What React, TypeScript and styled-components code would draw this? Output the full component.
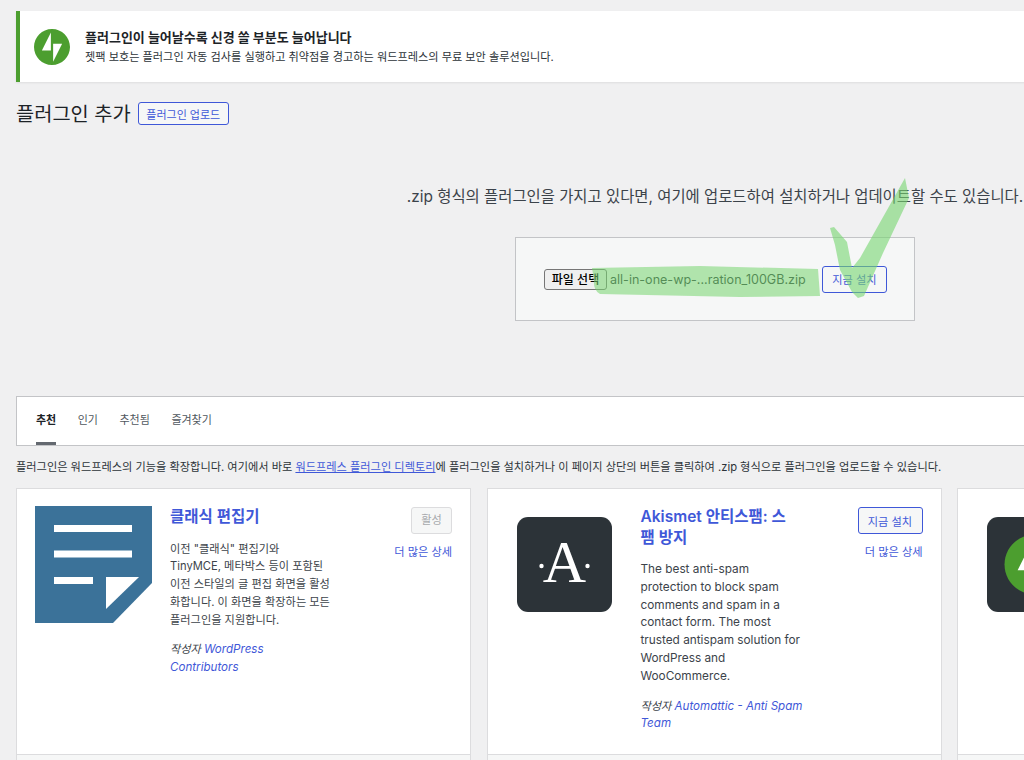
import styled, { createGlobalStyle } from "styled-components";

const GlobalStyle = createGlobalStyle`
  html, body {
    margin: 0;
    height: 760px;
    overflow: hidden;
    background: #f0f0f1;
  }
  body {
    font-family: Inter, "Noto Sans CJK KR", sans-serif;
    color: #3c434a;
    font-size: 12px;
  }
`;

const ACCENT = "#3f58d8";

const Page = styled.div`
  position: relative;
  width: 1398px;
  height: 760px;
  overflow: hidden;
  padding: 11px 0 0 16px;
`;

const Notice = styled.div`
  display: flex;
  align-items: center;
  gap: 15px;
  height: 71px;
  box-sizing: border-box;
  padding-left: 14px;
  background: #fff;
  border-left: 4px solid #4c9e2f;
  box-shadow: 0 1px 2px rgba(0, 0, 0, 0.08);
`;

const NoticeBody = styled.div`
  display: flex;
  flex-direction: column;
  gap: 3px;
`;

const NoticeTitle = styled.div`
  font-size: 13px;
  font-weight: 700;
  line-height: 18px;
  color: #1d2327;
`;

const NoticeText = styled.div`
  font-size: 11.17px;
  line-height: 16px;
  color: #2c3338;
`;

const HeadingRow = styled.div`
  display: flex;
  align-items: center;
  gap: 7px;
  margin-top: 20px;
  height: 23px;
`;

const Heading = styled.h1`
  margin: 0;
  font-size: 19.8px;
  font-weight: 400;
  line-height: 22px;
  color: #1d2327;
`;

const OutlineButton = styled.button<{ $size?: "sm" | "md" }>`
  display: inline-flex;
  align-items: center;
  justify-content: center;
  box-sizing: border-box;
  padding: 0;
  font-family: inherit;
  font-size: ${(p) => (p.$size === "sm" ? "11px" : "11.2px")};
  width: ${(p) => (p.$size === "sm" ? "91px" : "65px")};
  height: ${(p) => (p.$size === "sm" ? "23px" : "27px")};
  color: ${ACCENT};
  background: #f6f7f7;
  border: 1px solid ${ACCENT};
  border-radius: 3px;
`;

const UploadSection = styled.section`
  display: flex;
  flex-direction: column;
  align-items: center;
  margin-top: 60px;
`;

const UploadHint = styled.p`
  margin: 0;
  font-size: 15.4px;
  line-height: 24px;
  color: #3c434a;
`;

const UploadBox = styled.div`
  display: flex;
  align-items: center;
  box-sizing: border-box;
  width: 400px;
  height: 84px;
  margin-top: 28px;
  padding-left: 28px;
  background: #f6f7f7;
  border: 1px solid #c3c4c7;
`;

const FilePicker = styled.span`
  box-sizing: border-box;
  width: 63px;
  height: 21px;
  line-height: 19px;
  text-align: center;
  font-size: 12px;
  font-weight: 500;
  color: #000;
  background: #efefef;
  border: 1px solid #767676;
  border-radius: 3px;
`;

const FileName = styled.span`
  width: 215px;
  padding-left: 3px;
  box-sizing: border-box;
  font-size: 12.55px;
  color: #2c3338;
`;

const Tabs = styled.nav`
  display: flex;
  gap: 21.5px;
  box-sizing: border-box;
  height: 50px;
  margin-top: 75px;
  padding-left: 19px;
  background: #fff;
  border: 1px solid #c3c4c7;
`;

const Tab = styled.a<{ $active?: boolean }>`
  display: flex;
  align-items: center;
  box-sizing: border-box;
  height: 48px;
  padding-bottom: 2px;
  font-size: 11px;
  font-weight: ${(p) => (p.$active ? 600 : 400)};
  color: ${(p) => (p.$active ? "#1d2327" : "#50575e")};
  border-bottom: 3px solid ${(p) => (p.$active ? "#646970" : "transparent")};
`;

const Intro = styled.p`
  margin: 13px 0 0;
  font-size: 11.19px;
  line-height: 17px;
  white-space: nowrap;
  color: #2c3338;

  & a {
    color: ${ACCENT};
    text-decoration: underline;
  }
`;

const CardGrid = styled.div`
  display: grid;
  grid-template-columns: repeat(3, 455px);
  column-gap: 15.5px;
  margin-top: 12px;
`;

const Card = styled.article`
  background: #fff;
  border: 1px solid #dcdcde;
`;

const CardTop = styled.div`
  display: grid;
  grid-template-columns: 117px 164px 1fr;
  column-gap: 18px;
  align-items: start;
  box-sizing: border-box;
  height: 265px;
  padding: 17px 18px 0;
`;

const CardFooter = styled.div`
  height: 60px;
  background: #f6f7f7;
  border-top: 1px solid #dcdcde;
`;

const CardMain = styled.div`
  display: flex;
  flex-direction: column;
  padding-top: 1px;
`;

const CardTitle = styled.h3`
  margin: 0 0 13px;
  max-width: 155px;
  font-size: 15.5px;
  font-weight: 600;
  line-height: 20.5px;
  color: ${ACCENT};
`;

const CardText = styled.p<{ $latin?: boolean }>`
  margin: 0 0 12px;
  max-width: 163px;
  font-size: ${(p) => (p.$latin ? "11.8px" : "11.2px")};
  line-height: 17.8px;
  color: #3c434a;
`;

const Author = styled.p`
  margin: 0;
  font-size: 11.2px;
  line-height: 17.8px;
  font-style: italic;
  color: #3c434a;

  & a {
    font-size: 11.6px;
    color: ${ACCENT};
  }
`;

const Actions = styled.div`
  display: flex;
  flex-direction: column;
  align-items: flex-end;
  gap: 10px;
  padding-top: 1px;
`;

const DisabledButton = styled.span`
  box-sizing: border-box;
  width: 41px;
  height: 27px;
  line-height: 25px;
  text-align: center;
  font-size: 11.2px;
  color: #a7aaad;
  background: #f6f7f7;
  border: 1px solid #dcdcde;
  border-radius: 3px;
`;

const MoreLink = styled.a`
  font-size: 11.2px;
  line-height: 17px;
  color: ${ACCENT};
`;

const Scribble = styled.svg`
  position: absolute;
  top: 0;
  left: 0;
  pointer-events: none;
`;

const BOLT_PATH =
  "M16 0C7.2 0 0 7.2 0 16s7.2 16 16 16 16-7.2 16-16S24.8 0 16 0zM15 19H7l8-16v16zm2 10V13h8l-8 16z";

function ClassicEditorIcon() {
  return (
    <svg width="117" height="117" viewBox="0 0 117 117">
      <path d="M0 0h117v77L78 117H0z" fill="#3b7299" />
      <path d="M19 19h78v7H19zM19 44.5h78v7H19zM19 71h39v7H19z" fill="#fff" />
      <path d="M71 71h33L71 103z" fill="#fff" />
    </svg>
  );
}

function AkismetIcon() {
  return (
    <svg width="117" height="117" viewBox="0 0 117 117">
      <rect x="11" y="11" width="95" height="95" rx="11" fill="#2c3338" />
      <text x="58.5" y="76" textAnchor="middle" fontFamily="'Liberation Serif', serif" fontSize="60" fill="#fff">
        A
      </text>
      <circle cx="35.5" cy="60" r="2.2" fill="#fff" />
      <circle cx="81.5" cy="60" r="2.2" fill="#fff" />
    </svg>
  );
}

function JetpackIcon() {
  return (
    <svg width="117" height="117" viewBox="0 0 117 117">
      <rect x="11" y="11" width="95" height="95" rx="11" fill="#2c3338" />
      <g transform="translate(28.5 28.5) scale(1.875)">
        <circle cx="16" cy="16" r="15" fill="#fff" />
        <path d="M16 0C7.2 0 0 7.2 0 16s7.2 16 16 16 16-7.2 16-16S24.8 0 16 0z" fill="#4c9e2f" />
        <path d="M15 19H7l8-16v16zM17 29V13h8l-8 16z" fill="#fff" />
      </g>
    </svg>
  );
}

export default function App() {
  return (
    <>
      <GlobalStyle />
      <Page>
        <Notice>
          <svg width="36" height="36" viewBox="0 0 32 32">
            <path d={BOLT_PATH} fill="#4c9e2f" fillRule="evenodd" />
          </svg>
          <NoticeBody>
            <NoticeTitle>플러그인이 늘어날수록 신경 쓸 부분도 늘어납니다</NoticeTitle>
            <NoticeText>젯팩 보호는 플러그인 자동 검사를 실행하고 취약점을 경고하는 워드프레스의 무료 보안 솔루션입니다.</NoticeText>
          </NoticeBody>
        </Notice>

        <HeadingRow>
          <Heading>플러그인 추가</Heading>
          <OutlineButton $size="sm">플러그인 업로드</OutlineButton>
        </HeadingRow>

        <UploadSection>
          <UploadHint>.zip 형식의 플러그인을 가지고 있다면, 여기에 업로드하여 설치하거나 업데이트할 수도 있습니다.</UploadHint>
          <UploadBox>
            <FilePicker>파일 선택</FilePicker>
            <FileName>all-in-one-wp-...ration_100GB.zip</FileName>
            <OutlineButton>지금 설치</OutlineButton>
          </UploadBox>
        </UploadSection>

        <Tabs>
          <Tab $active>추천</Tab>
          <Tab>인기</Tab>
          <Tab>추천됨</Tab>
          <Tab>즐겨찾기</Tab>
        </Tabs>

        <Intro>
          플러그인은 워드프레스의 기능을 확장합니다. 여기에서 바로 <a href="#">워드프레스 플러그인 디렉토리</a>에 플러그인을 설치하거나 이 페이지 상단의 버튼을 클릭하여 .zip 형식으로 플러그인을 업로드할 수 있습니다.
        </Intro>

        <CardGrid>
          <Card>
            <CardTop>
              <ClassicEditorIcon />
              <CardMain>
                <CardTitle>클래식 편집기</CardTitle>
                <CardText>이전 "클래식" 편집기와 TinyMCE, 메타박스 등이 포함된 이전 스타일의 글 편집 화면을 활성화합니다. 이 화면을 확장하는 모든 플러그인을 지원합니다.</CardText>
                <Author>
                  작성자 <a>WordPress Contributors</a>
                </Author>
              </CardMain>
              <Actions>
                <DisabledButton>활성</DisabledButton>
                <MoreLink>더 많은 상세</MoreLink>
              </Actions>
            </CardTop>
            <CardFooter />
          </Card>
          <Card>
            <CardTop>
              <AkismetIcon />
              <CardMain>
                <CardTitle>Akismet 안티스팸: 스팸 방지</CardTitle>
                <CardText $latin>The best anti-spam protection to block spam comments and spam in a contact form. The most trusted antispam solution for WordPress and WooCommerce.</CardText>
                <Author>
                  작성자 <a>Automattic - Anti Spam Team</a>
                </Author>
              </CardMain>
              <Actions>
                <OutlineButton>지금 설치</OutlineButton>
                <MoreLink>더 많은 상세</MoreLink>
              </Actions>
            </CardTop>
            <CardFooter />
          </Card>
          <Card>
            <CardTop>
              <JetpackIcon />
            </CardTop>
            <CardFooter />
          </Card>
        </CardGrid>

        <Scribble width="1024" height="760" viewBox="0 0 1024 760">
          <path
            d="M592 268 L700 266 L818 269 L820 296 L740 297 L600 294 Q593 290 594 280 Z"
            fill="rgba(118, 214, 112, 0.55)"
          />
          <path
            d="M830 228 L834 227 L847 242 L852 268 L860 258 L905 178 L909 198 L883 253 L864 296 L858 298 L852 292 L840 270 L835 245 Z"
            fill="rgba(118, 214, 112, 0.6)"
          />
        </Scribble>
      </Page>
    </>
  );
}
